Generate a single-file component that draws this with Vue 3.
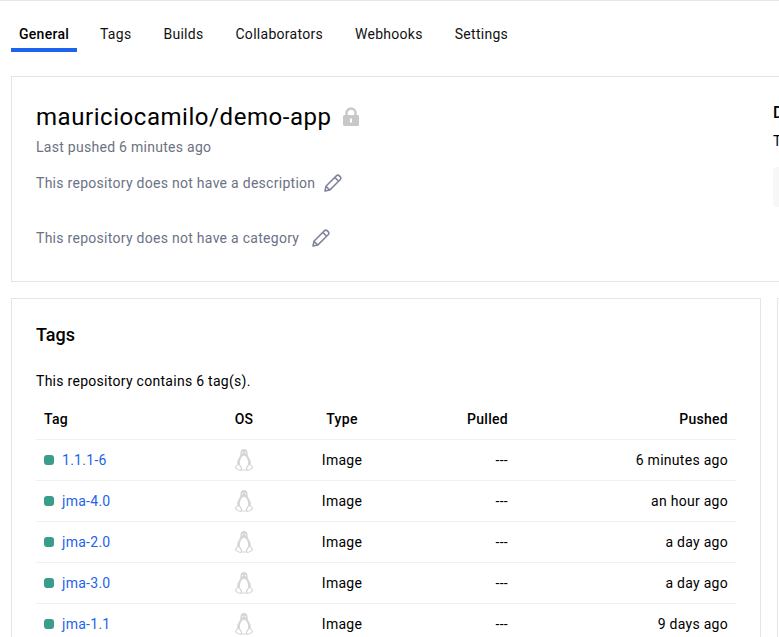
<script setup>
const tabs = ['General', 'Tags', 'Builds', 'Collaborators', 'Webhooks', 'Settings'];

const tags = [
  { name: '1.1.1-6', pushed: '6 minutes ago' },
  { name: 'jma-4.0', pushed: 'an hour ago' },
  { name: 'jma-2.0', pushed: 'a day ago' },
  { name: 'jma-3.0', pushed: 'a day ago' },
  { name: 'jma-1.1', pushed: '9 days ago' },
];
</script>

<template>
  <div class="page">
    <nav class="tabs">
      <a v-for="(tab, i) in tabs" :key="tab" class="tab" :class="{ active: i === 0 }">{{ tab }}</a>
    </nav>

    <section class="card repo">
      <div class="repo-main">
        <h1 class="repo-name">
          mauriciocamilo/demo-app
          <svg class="lock" viewBox="0 0 18 20" width="18" height="20">
            <path d="M4.500 8V6a4.500 4.500 0 0 1 9 0v2" fill="none" stroke="#c8c8c8" stroke-width="2.400" />
            <path d="M2.500 8h13A1.500 1.500 0 0 1 17 9.500v8a1.500 1.500 0 0 1-1.500 1.500h-13A1.500 1.500 0 0 1 1 17.500v-8A1.500 1.500 0 0 1 2.500 8zM8 11.500v4h2v-4z" fill="#c8c8c8" fill-rule="evenodd" />
          </svg>
        </h1>
        <p class="pushed">Last pushed 6 minutes ago</p>
        <p class="meta description">
          This repository does not have a description
          <svg class="pencil" viewBox="0 0 18 18" width="18" height="18">
            <path d="M1 17l.9-4.700L12.300 1.900a2.200 2.200 0 0 1 3.100 0l.7.700a2.200 2.200 0 0 1 0 3.100L5.700 16.100zM1.900 12.300l3.800 3.800M10.800 3.400l3.800 3.800" fill="none" stroke="#7d8398" stroke-width="1.500" stroke-linejoin="round" />
          </svg>
        </p>
        <p class="meta category">
          This repository does not have a category
          <svg class="pencil" viewBox="0 0 18 18" width="18" height="18">
            <path d="M1 17l.9-4.700L12.300 1.900a2.200 2.200 0 0 1 3.100 0l.7.700a2.200 2.200 0 0 1 0 3.100L5.700 16.100zM1.900 12.300l3.800 3.800M10.800 3.400l3.800 3.800" fill="none" stroke="#7d8398" stroke-width="1.500" stroke-linejoin="round" />
          </svg>
        </p>
      </div>
      <div class="repo-side">
        <h2 class="side-title">Docker commands</h2>
        <p class="side-text">To push a new tag to this repository:</p>
        <div class="side-box"></div>
      </div>
    </section>

    <div class="columns">
      <section class="card tags-card">
        <h2 class="tags-title">Tags</h2>
        <p class="tags-count">This repository contains 6 tag(s).</p>
        <table class="tags-table">
          <thead>
            <tr>
              <th class="col-tag">Tag</th>
              <th class="col-os">OS</th>
              <th class="col-type">Type</th>
              <th class="col-pulled">Pulled</th>
              <th class="col-pushed">Pushed</th>
            </tr>
          </thead>
          <tbody>
            <tr v-for="tag in tags" :key="tag.name">
              <td class="col-tag"><span class="dot"></span><a class="tag-link">{{ tag.name }}</a></td>
              <td class="col-os">
                <svg class="linux" viewBox="0 0 20 24" width="20" height="24">
                  <path d="M10 1c-2.700 0-3.700 2-3.600 4.600.1 2-.7 3.200-1.900 5-1.200 1.900-1.500 3.800-1.200 6h13.400c.3-2.200 0-4.100-1.200-6-1.200-1.800-2-3-1.900-5C13.700 3 12.700 1 10 1z" fill="#d6d6d6" />
                  <path d="M10 7.800c-1.300 0-2.600 1.500-3.400 3.500-.8 2-1 4.300-.4 6.500.6 2 2.200 3.200 3.800 3.200s3.200-1.200 3.800-3.200c.6-2.200.4-4.500-.4-6.500-.8-2-2.100-3.500-3.400-3.500z" fill="#fff" />
                  <path d="M7.500 21.700c1.700.5 3.300.5 5 0" fill="none" stroke="#d6d6d6" stroke-width="1.100" />
                  <path d="M4.300 16c-1 1.200-2.800 2.600-2.800 3.600 0 .8 3.700 3 5.400 2.700 1-.2.700-2.300-.3-3.700-.7-1-1.500-2.600-2.300-2.600zM15.700 16c1 1.200 2.800 2.600 2.800 3.600 0 .8-3.700 3-5.400 2.700-1-.2-.7-2.300.3-3.700.7-1 1.500-2.600 2.300-2.600z" fill="#fff" stroke="#d2d2d2" stroke-width="1.100" stroke-linejoin="round" />
                  <circle cx="8.600" cy="4.600" r=".7" fill="#fff" />
                  <circle cx="11.400" cy="4.600" r=".7" fill="#fff" />
                </svg>
              </td>
              <td class="col-type">Image</td>
              <td class="col-pulled">---</td>
              <td class="col-pushed">{{ tag.pushed }}</td>
            </tr>
          </tbody>
        </table>
      </section>
      <section class="card next-card"></section>
    </div>
  </div>
</template>

<style scoped>
.page {
  width: 779px;
  height: 637px;
  overflow: hidden;
  box-sizing: border-box;
  border-top: 1px solid #e5e7eb;
  font-family: Roboto, sans-serif;
  font-size: 14px;
  letter-spacing: 0.02em;
  color: #000;
  background: #fff;
}

.tabs {
  display: flex;
  padding: 19px 0 0 11px;
  height: 32px;
}

.tab {
  padding: 0 8px;
  margin-right: 16px;
  height: 32px;
  line-height: 28px;
  box-sizing: border-box;
  color: #111;
}

.tab.active {
  width: 66px;
  margin-right: 15px;
  font-weight: 500;
  white-space: nowrap;
  color: #000;
  border-bottom: 4px solid #1d63ed;
}

.card {
  box-sizing: border-box;
  border: 1px solid #e5e5e5;
  background: #fff;
}

.repo {
  margin: 24px 0 0 11px;
  width: 1200px;
  height: 206px;
  padding: 24px;
  display: flex;
}

.repo-main {
  width: 737px;
  flex-shrink: 0;
}

.repo-name {
  margin: 0;
  font-size: 24px;
  font-weight: 400;
  line-height: 32px;
  letter-spacing: 0.55px;
  display: flex;
  align-items: center;
}

.lock {
  margin-left: 10px;
}

.pushed {
  margin: 4px 0 0;
  line-height: 20px;
  color: #6b7280;
}

.meta {
  margin: 0;
  display: flex;
  align-items: center;
  line-height: 20px;
  color: #6b7285;
}

.pencil {
  margin-left: 9px;
}

.description {
  margin-top: 16px;
}

.category {
  margin-top: 35px;
}

.category .pencil {
  margin-left: 13px;
}

.side-title {
  margin: 0;
  font-size: 16px;
  font-weight: 500;
  line-height: 24px;
}

.side-text {
  margin: 6px 0 0;
  line-height: 20px;
}

.side-box {
  margin-top: 16px;
  height: 40px;
  border-radius: 4px;
  background: #f7f7f7;
}

.columns {
  display: flex;
  gap: 16px;
  margin: 16px 0 0 11px;
}

.tags-card {
  width: 750px;
  flex-shrink: 0;
  height: 400px;
  padding: 24px;
}

.next-card {
  width: 400px;
  flex-shrink: 0;
  height: 400px;
}

.tags-title {
  margin: 0;
  font-size: 18px;
  font-weight: 500;
  line-height: 24px;
  letter-spacing: 0;
}

.tags-count {
  margin: 24px 0 0;
  line-height: 20px;
}

.tags-table {
  width: 700px;
  margin-top: 8px;
  border-collapse: collapse;
  table-layout: fixed;
}

.tags-table th,
.tags-table td {
  box-sizing: border-box;
  height: 41px;
  padding: 0 8px;
  border-bottom: 1px solid #f0f0f0;
}

.tags-table th {
  height: 40px;
  font-weight: 500;
}

.col-tag {
  width: 160px;
  text-align: left;
}

.col-os {
  width: 96px;
  text-align: center;
}

.col-type {
  width: 100px;
  text-align: center;
}

.col-pulled {
  width: 124px;
  text-align: right;
}

.col-pushed {
  text-align: right;
}

.dot {
  display: inline-block;
  width: 10px;
  height: 10px;
  margin-right: 8px;
  border-radius: 3px;
  background: #3a9d8c;
}

.tag-link {
  color: #1d63ed;
}

.linux {
  display: block;
  margin: 0 auto;
}
</style>
